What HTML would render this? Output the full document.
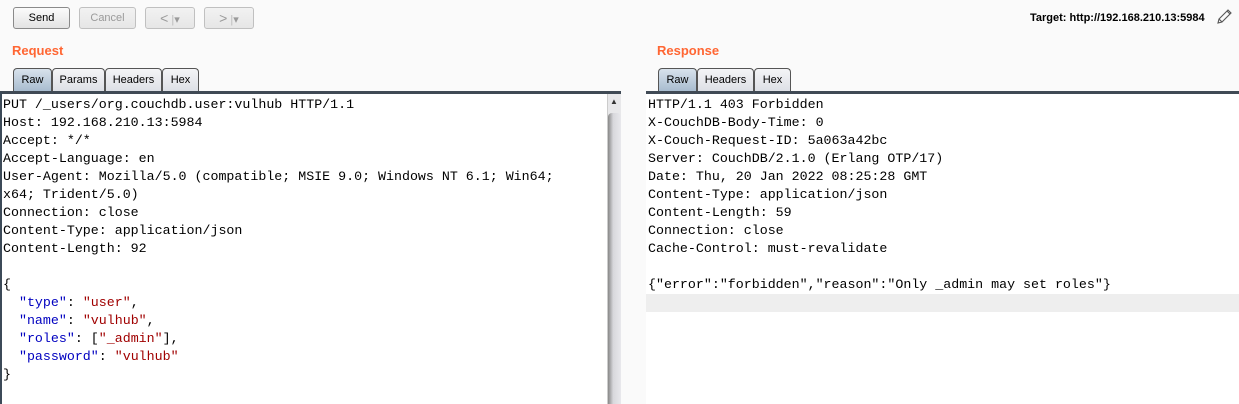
<!DOCTYPE html>
<html><head><style>
*{margin:0;padding:0;box-sizing:border-box}
body{width:1239px;height:404px;background:#fafafa;position:relative;overflow:hidden;font-family:"Liberation Sans",Arial,sans-serif}
.btn{position:absolute;top:7px;height:22px;border:1px solid #8a8a8a;border-radius:3px;background:linear-gradient(#fbfbfb,#e3e3e3);font-size:11px;text-align:center;line-height:20px;color:#000}
.dis{border-color:#c0c0c0;color:#9a9a9a;background:linear-gradient(#f2f2f2,#e6e6e6)}
.arr{font-size:14px}
.h{position:absolute;top:43px;font-size:13px;font-weight:bold;color:#ff6633}
.tab{position:absolute;top:68px;height:23px;border:1px solid #555;border-bottom:none;border-radius:4px 4px 0 0;background:linear-gradient(#f4f4f6,#dde0e6);font-size:11px;line-height:22px;text-align:center}
.tab.a{background:linear-gradient(#d8e2ec,#a8bccf)}
.line{position:absolute;top:91px;height:3px;background:#404a55}
.ed{position:absolute;top:94px;bottom:0;background:#fff;font-family:"Liberation Mono",monospace;font-size:13.3px;line-height:18px;white-space:pre;padding:2px 0 0 2px;color:#000}
.k{color:#0000c0}.v{color:#a00000}
</style></head><body>
<div style="position:absolute;left:0;top:92px;bottom:0;width:2px;background:#3c4a58;z-index:2"></div>
<div class="btn" style="left:13px;width:57px">Send</div>
<div class="btn dis" style="left:79px;width:57px">Cancel</div>
<div class="btn dis" style="left:145px;width:50px"><span class="arr">&lt;</span> <span style="color:#bbb">|</span>&#9662;</div>
<div class="btn dis" style="left:204px;width:50px"><span class="arr">&gt;</span> <span style="color:#bbb">|</span>&#9662;</div>
<div style="position:absolute;left:1030px;top:12px;font-size:11px;font-weight:bold">Target: http://192.168.210.13:5984</div>
<svg style="position:absolute;left:1215px;top:8px" width="18" height="18" viewBox="0 0 18 18"><path d="M3 15 L4 11 L13 2 L16 5 L7 14 Z M4 11 L7 14 M12 3 L15 6" fill="none" stroke="#555" stroke-width="1.1"/></svg>
<div class="h" style="left:12px">Request</div>
<div class="h" style="left:657px">Response</div>
<div class="tab a" style="left:13px;width:39px">Raw</div>
<div class="tab" style="left:52px;width:53px">Params</div>
<div class="tab" style="left:105px;width:57px">Headers</div>
<div class="tab" style="left:162px;width:37px">Hex</div>
<div class="tab a" style="left:658px;width:39px">Raw</div>
<div class="tab" style="left:697px;width:57px">Headers</div>
<div class="tab" style="left:754px;width:37px">Hex</div>
<div class="line" style="left:0;width:621px"></div>
<div class="line" style="left:646px;width:593px"></div>
<div class="ed" style="left:0;width:607px;padding-left:3px">PUT /_users/org.couchdb.user:vulhub HTTP/1.1
Host: 192.168.210.13:5984
Accept: */*
Accept-Language: en
User-Agent: Mozilla/5.0 (compatible; MSIE 9.0; Windows NT 6.1; Win64;
x64; Trident/5.0)
Connection: close
Content-Type: application/json
Content-Length: 92

{
  <span class="k">"type"</span>: <span class="v">"user"</span>,
  <span class="k">"name"</span>: <span class="v">"vulhub"</span>,
  <span class="k">"roles"</span>: [<span class="v">"_admin"</span>],
  <span class="k">"password"</span>: <span class="v">"vulhub"</span>
}</div>
<div style="position:absolute;left:607px;top:94px;bottom:0;width:14px;background:#e8e8ea;border-left:1px solid #ccc"></div>
<div style="position:absolute;left:610px;top:97px;font-size:8px;color:#333">&#9650;</div>
<div style="position:absolute;left:608px;top:113px;bottom:0;width:13px;background:linear-gradient(90deg,#888,#d8d8dc 40%,#e8e8ec);border-radius:4px 4px 0 0"></div>
<div class="ed" style="left:646px;right:0">HTTP/1.1 403 Forbidden
X-CouchDB-Body-Time: 0
X-Couch-Request-ID: 5a063a42bc
Server: CouchDB/2.1.0 (Erlang OTP/17)
Date: Thu, 20 Jan 2022 08:25:28 GMT
Content-Type: application/json
Content-Length: 59
Connection: close
Cache-Control: must-revalidate

{"error":"forbidden","reason":"Only _admin may set roles"}
<span style="display:block;background:#eeeeee;margin-left:-2px;height:18px"></span></div>
</body></html>
